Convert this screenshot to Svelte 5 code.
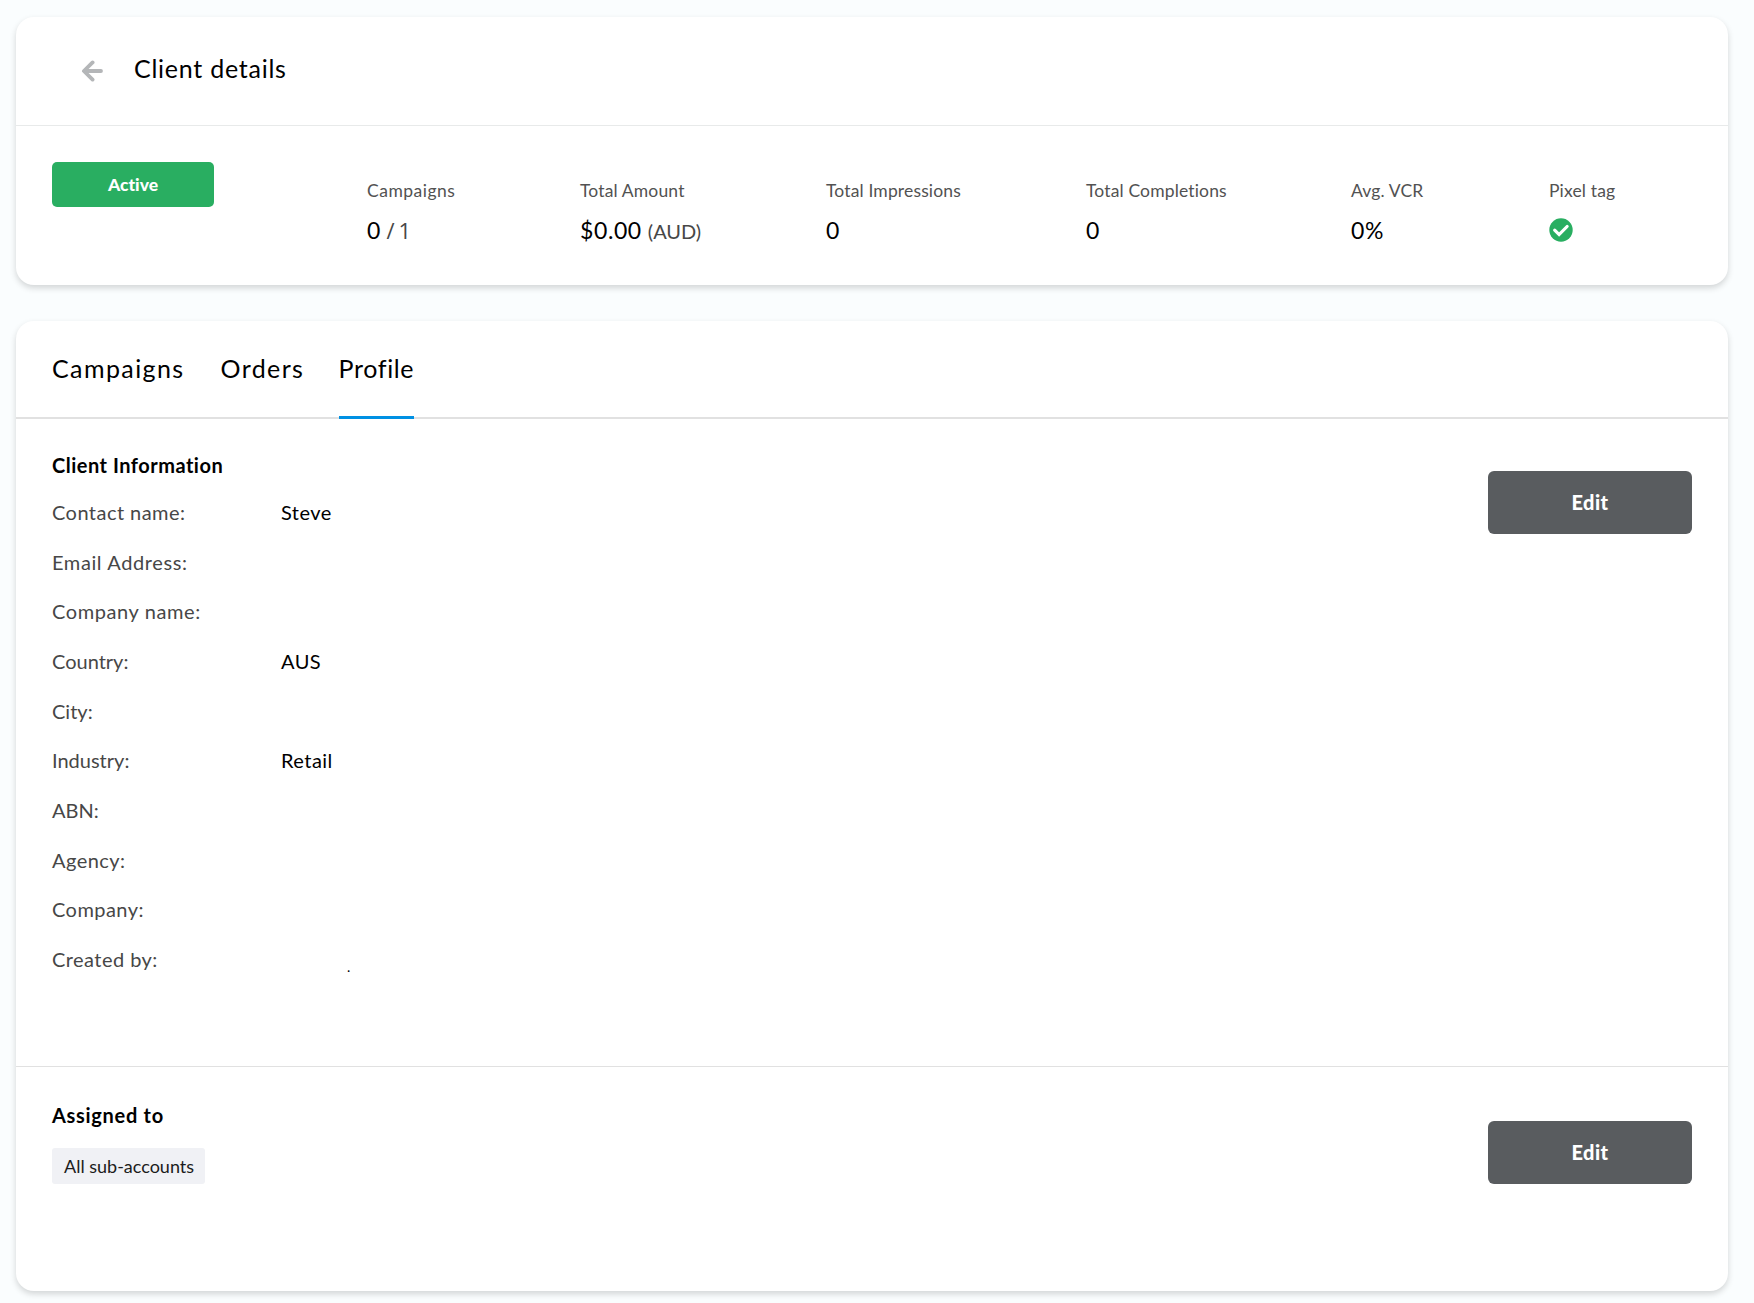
<script>
  const stats = [
    { label: 'Campaigns', value: '0', extra: '/ 1', kind: 'ratio' },
    { label: 'Total Amount', value: '$0.00', extra: '(AUD)', kind: 'unit' },
    { label: 'Total Impressions', value: '0' },
    { label: 'Total Completions', value: '0' },
    { label: 'Avg. VCR', value: '0%' },
    { label: 'Pixel tag', kind: 'check' }
  ];
  const fields = [
    ['Contact name:', 'Steve'],
    ['Email Address:', ''],
    ['Company name:', ''],
    ['Country:', 'AUS'],
    ['City:', ''],
    ['Industry:', 'Retail'],
    ['ABN:', ''],
    ['Agency:', ''],
    ['Company:', ''],
    ['Created by:', '.']
  ];
  const tabs = ['Campaigns', 'Orders', 'Profile'];
</script>

<main class="page">
  <section class="card summary">
    <header class="title-bar">
      <svg class="back" viewBox="0 0 22 22"><path d="M11.6 2.4 2.9 11l8.7 8.6M3.4 11h16.6" /></svg>
      <h1>Client details</h1>
    </header>
    <div class="overview">
      <span class="status">Active</span>
      <div class="stats">
        {#each stats as s}
          <div class="stat">
            <span class="label">{s.label}</span>
            {#if s.kind === 'check'}
              <svg class="check" viewBox="0 0 24 24"><circle cx="12" cy="12" r="11.7" /><path d="m5.7 12.2 4.4 4.4 8-8.1" /></svg>
            {:else}
              <span class="value">{s.value}{#if s.extra}<span class={s.kind}>{s.extra}</span>{/if}</span>
            {/if}
          </div>
        {/each}
      </div>
    </div>
  </section>

  <section class="card details">
    <nav class="tabs">
      {#each tabs as tab}
        <a class:active={tab === 'Profile'}>{tab}</a>
      {/each}
    </nav>
    <div class="block info">
      <div>
        <h2>Client Information</h2>
        <dl>
          {#each fields as [name, value]}
            <div class="field"><dt>{name}</dt><dd class:mark={value === '.'}>{value}</dd></div>
          {/each}
        </dl>
      </div>
      <button>Edit</button>
    </div>
    <div class="block assigned">
      <div>
        <h2 class="wide">Assigned to</h2>
        <span class="tag">All sub-accounts</span>
      </div>
      <button>Edit</button>
    </div>
  </section>
</main>

<style>
  :global(body) { background: #fafdfe; }
  * { box-sizing: border-box; margin: 0; }
  .page {
    display: flex; flex-direction: column; gap: 36px;
    height: 1303px; padding: 17px 26px 12px 16px;
    font-family: Lato, "Open Sans", sans-serif; color: #000;
    font-variant-ligatures: none;
  }
  .card { background: #fff; border-radius: 18px; box-shadow: 0 3px 6px rgba(0, 0, 0, 0.16); }
  .summary { height: 268px; }
  .title-bar { display: flex; align-items: flex-start; height: 109px; padding: 36px 0 0 65px; border-bottom: 1px solid #e8eaea; }
  .back { width: 22px; height: 22px; margin-top: 7px; fill: none; stroke: #b4b6b8; stroke-width: 3.8; stroke-linecap: round; stroke-linejoin: round; }
  h1 { margin-left: 31px; font-size: 25px; font-weight: 400; line-height: 30px; letter-spacing: 0.75px; }
  .overview { display: flex; padding: 36px 36px 0; }
  .status { width: 162px; height: 45px; border-radius: 5px; background: #29ae61; color: #fff; font-size: 17.5px; font-weight: 900; line-height: 46px; text-align: center; }
  .stats { display: grid; grid-template-columns: 213px 246px 260px 265px 198px 100px; margin: 18px 0 0 153px; }
  .stat { display: flex; flex-direction: column; }
  .label { color: #525252; font-size: 17.5px; line-height: 22px; letter-spacing: 0.15px; }
  .stat:first-child .label { letter-spacing: 0.5px; }
  .value { margin-top: 14px; font-size: 23px; line-height: 28px; letter-spacing: 0.6px; }
  .ratio { margin-left: 5.5px; color: #474747; font-family: "Open Sans", sans-serif; font-size: 22px; letter-spacing: -0.9px; }
  .unit { margin-left: 6px; color: #474747; font-size: 20px; letter-spacing: 0; }
  .check { width: 24px; height: 24px; margin-top: 16px; fill: #29ae61; }
  .check path { fill: none; stroke: #fff; stroke-width: 3.2; stroke-linecap: round; }
  .details { height: 970px; }
  .tabs { display: grid; grid-template-columns: 132.5px 82px 75px; gap: 36px; height: 98px; padding: 32px 36px 0; border-bottom: 2px solid #e1e1e1; }
  .tabs a { height: 66px; font-size: 25px; line-height: 30px; letter-spacing: 1.4px; white-space: nowrap; }
  .tabs .active { border-bottom: 3px solid #0090e3; letter-spacing: 0.65px; }
  .block { display: flex; justify-content: space-between; padding: 0 36px; }
  .info { height: 648px; padding-top: 34px; border-bottom: 1px solid #e1e1e1; }
  .assigned { padding-top: 36px; }
  h2 { font-size: 20px; font-weight: 700; line-height: 24px; letter-spacing: 0.5px; }
  .wide { letter-spacing: 0.7px; }
  dl { padding-top: 12px; }
  .field { display: flex; height: 49.67px; padding-top: 11px; font-size: 20px; line-height: 24px; letter-spacing: 0.45px; }
  .field:nth-child(2), .field:nth-child(3) { letter-spacing: 0.6px; }
  .field:nth-child(n + 4):nth-child(-n + 7) dt { letter-spacing: 0; }
  dt { width: 229px; color: #474747; }
  .mark { padding: 8px 0 0 66px; font-size: 14px; line-height: 24px; }
  button { width: 204px; height: 63px; margin-top: 18px; padding: 0 0 2px; border: 0; border-radius: 6px; background: #595c5f; color: #fff; font: 900 20px/24px Lato, sans-serif; letter-spacing: 0.4px; }
  .tag { display: block; width: 153px; height: 36px; margin-top: 21px; padding-left: 12px; border-radius: 3px; background: #f0f1f5; color: #1c1c1c; font-size: 18px; line-height: 36px; white-space: nowrap; }
</style>
